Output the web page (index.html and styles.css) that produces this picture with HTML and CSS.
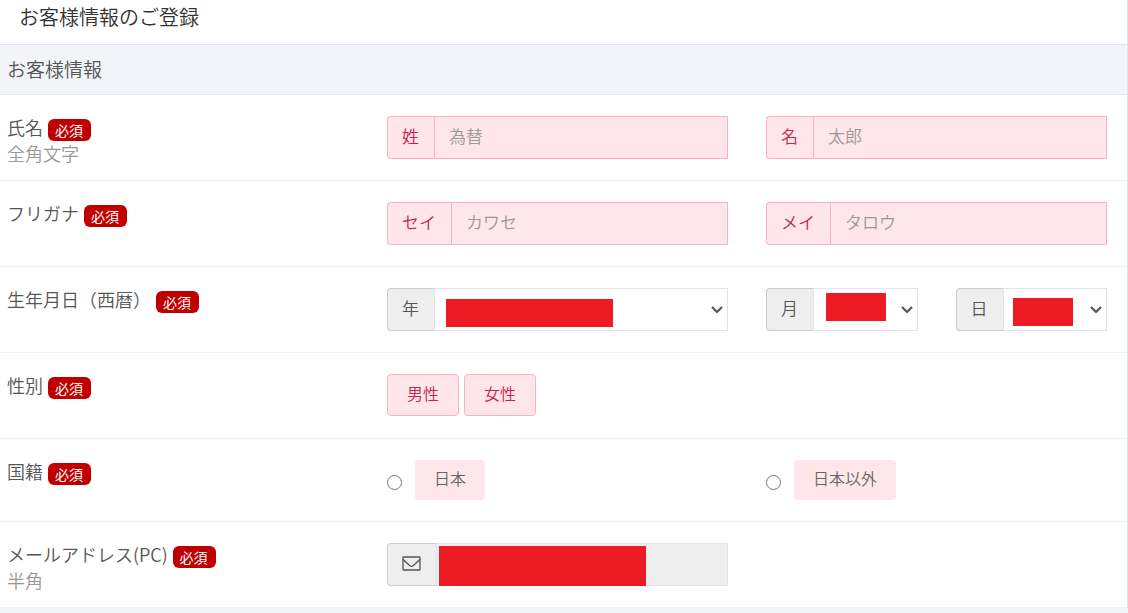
FILE: index.html
```
<!DOCTYPE html>
<html lang="ja">
<head>
  <meta charset="UTF-8">
  <meta name="viewport" content="width=device-width, initial-scale=1.0">
  <title>お客様情報のご登録</title>
  <link rel="stylesheet" href="styles.css">
</head>
<body>
  <form class="panel">
    <h1 class="panel-title">お客様情報のご登録</h1>
    <h2 class="section-title">お客様情報</h2>

    <!-- 氏名 -->
    <div class="form-row">
      <div class="row-label">
        <span>氏名</span><span class="badge">必須</span>
        <p class="hint">全角文字</p>
      </div>
      <div class="input-group required">
        <label class="addon" for="lastName">姓</label>
        <input class="control" type="text" id="lastName" placeholder="為替">
      </div>
      <div class="input-group required">
        <label class="addon" for="firstName">名</label>
        <input class="control" type="text" id="firstName" placeholder="太郎">
      </div>
    </div>

    <!-- フリガナ -->
    <div class="form-row">
      <div class="row-label">
        <span>フリガナ</span><span class="badge">必須</span>
      </div>
      <div class="input-group required">
        <label class="addon" for="lastKana">セイ</label>
        <input class="control" type="text" id="lastKana" placeholder="カワセ">
      </div>
      <div class="input-group required">
        <label class="addon" for="firstKana">メイ</label>
        <input class="control" type="text" id="firstKana" placeholder="タロウ">
      </div>
    </div>

    <!-- 生年月日 -->
    <div class="form-row">
      <div class="row-label">
        <span>生年月日（西暦）</span><span class="badge">必須</span>
      </div>
      <div class="input-group">
        <label class="addon" for="birthYear">年</label>
        <select class="control" id="birthYear"><option></option></select>
        <span class="mask mask-year"></span>
      </div>
      <div class="month-day">
        <div class="input-group">
          <label class="addon" for="birthMonth">月</label>
          <select class="control" id="birthMonth"><option></option></select>
          <span class="mask mask-month"></span>
        </div>
        <div class="input-group">
          <label class="addon" for="birthDay">日</label>
          <select class="control" id="birthDay"><option></option></select>
          <span class="mask mask-day"></span>
        </div>
      </div>
    </div>

    <!-- 性別 -->
    <div class="form-row">
      <div class="row-label">
        <span>性別</span><span class="badge">必須</span>
      </div>
      <div class="button-group">
        <button class="choice" type="button">男性</button>
        <button class="choice" type="button">女性</button>
      </div>
    </div>

    <!-- 国籍 -->
    <div class="form-row">
      <div class="row-label">
        <span>国籍</span><span class="badge">必須</span>
      </div>
      <div class="radio-item">
        <input class="radio" type="radio" name="nationality" id="japan">
        <label class="radio-label" for="japan">日本</label>
      </div>
      <div class="radio-item">
        <input class="radio" type="radio" name="nationality" id="other">
        <label class="radio-label" for="other">日本以外</label>
      </div>
    </div>

    <!-- メールアドレス -->
    <div class="form-row">
      <div class="row-label">
        <span>メールアドレス(PC)</span><span class="badge">必須</span>
        <p class="hint">半角</p>
      </div>
      <div class="input-group">
        <label class="addon" for="email" aria-label="メールアドレス">
          <svg class="mail-icon" width="19" height="15" viewBox="0 0 19 15" fill="none" stroke="currentColor" stroke-width="1.3">
            <rect x="1" y="1" width="17" height="13" rx="0.5"/>
            <path d="M1 3.2 C3.5 6 6 8 8 9.8 Q9.5 11 11 9.8 C13 8 15.5 6 18 3.2"/>
          </svg>
        </label>
        <input class="control" type="email" id="email" disabled>
        <span class="mask mask-mail"></span>
      </div>
    </div>
  </form>
</body>
</html>
```
FILE: styles.css
```
* {
  box-sizing: border-box;
}

body {
  margin: 0;
  background-color: #f3f4f9;
  color: #555;
  font-family: "Noto Sans CJK JP", sans-serif;
  font-size: 17px;
  font-weight: 350;
  line-height: 24px;
}

.panel {
  background-color: #fff;
  border-right: 1px solid #dee5ec;
}

.panel-title {
  margin: 0;
  padding: 2px 19px 12px;
  color: #333;
  font-size: 20px;
  font-weight: 350;
  line-height: 30px;
}

.section-title {
  margin: 0;
  padding: 9px 7px 10px;
  background-color: #f3f4f9;
  border-top: 1px solid #dee5ec;
  border-bottom: 1px solid #dee5ec;
  font-size: 19px;
  font-weight: 350;
  line-height: 30px;
}

.form-row {
  display: grid;
  grid-template-columns: repeat(3, 1fr);
  align-items: start;
  gap: 38px;
  min-height: 86px;
  padding: 21px 20px 21px 8px;
  border-bottom: 1px dotted #dee5ec;
}

.form-row:has(.radio-item) {
  min-height: 0;
}

.row-label {
  height: 40px;
  margin-top: -1px;
  margin-left: -1px;
  font-size: 18px;
}

.hint {
  margin: 0;
  color: #999;
}

.badge {
  display: inline-block;
  margin-left: 5px;
  padding: 0 8px 0 7px;
  border-radius: 6px;
  background-color: #c00000;
  color: #fff;
  font-size: 14px;
  font-weight: 400;
  line-height: 22px;
  vertical-align: -1px;
}

.input-group {
  position: relative;
  display: flex;
  height: 43px;
}

.addon {
  display: flex;
  align-items: center;
  padding: 0 15px 3px 14px;
  background-color: #eee;
  border: 1px solid #ccc;
  border-right: 0;
  border-radius: 4px 0 0 4px;
}

.control {
  flex: 1;
  min-width: 0;
  padding: 0 15px 3px 14px;
  background-color: #fff;
  border: 1px solid #dee5ec;
  border-radius: 0;
  color: #555;
  font: inherit;
}

select.control {
  appearance: none;
  background-image: url("data:image/svg+xml,%3Csvg xmlns='http://www.w3.org/2000/svg' width='12' height='8' viewBox='0 0 12 8'%3E%3Cpath d='M1 1l5 5 5-5' fill='none' stroke='%23555' stroke-width='2.2'/%3E%3C/svg%3E");
  background-repeat: no-repeat;
  background-position: right 4px center;
}

.control:disabled {
  background-color: #eee;
}

.control::placeholder {
  color: #999;
}

.required .addon,
.required .control {
  background-color: #ffe6eb;
  border-color: #ffb0c8;
}

.required .addon {
  color: #c7254e;
}

.month-day {
  display: grid;
  grid-template-columns: 1fr 1fr;
  gap: 38px;
}

/* 入力値を隠す */
.mask {
  position: absolute;
  height: 28px;
  background-color: #ed1c24;
}

.mask-year {
  top: 11px;
  left: 59px;
  width: 167px;
}

.mask-month {
  top: 5px;
  left: 60px;
  width: 60px;
}

.mask-day {
  top: 10px;
  left: 57px;
  width: 60px;
}

.mask-mail {
  top: 3px;
  left: 52px;
  width: 207px;
  height: 40px;
}

.button-group {
  display: flex;
  gap: 5px;
}

.choice {
  height: 42px;
  padding: 0 19px 4px;
  background-color: #ffe6eb;
  border: 1px solid #ffb0c8;
  border-radius: 4px;
  color: #c7254e;
  font: inherit;
  font-size: 16px;
}

.radio-item {
  display: flex;
  align-items: center;
  gap: 13px;
}

.radio {
  width: 15px;
  height: 15px;
  margin: 5px 0 0;
}

.radio-label {
  padding: 6px 19px 10px;
  background-color: #ffe6eb;
  border-radius: 4px;
  color: #666;
  font-size: 16px;
}
```
